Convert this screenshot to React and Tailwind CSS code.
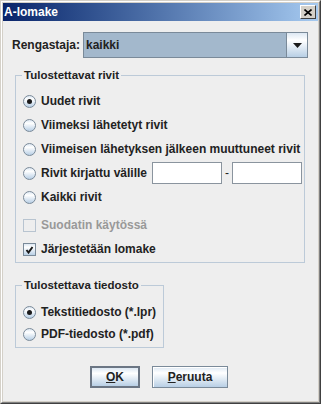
import React from 'react'

const grad = 'bg-[linear-gradient(to_bottom,#dde8f3_0%,#ffffff_30%,#b8cfe5_100%)]'

function Radio({ checked }) {
  return (
    <span className={`relative flex items-center justify-center w-[13px] h-[13px] rounded-full border border-[#7a8a99] ${grad}`}>
      {checked && <span className="w-[5px] h-[5px] rounded-full bg-[#1a1a1a]" />}
    </span>
  )
}

function Check({ checked, disabled }) {
  return (
    <span
      className={`flex items-center justify-center w-[13px] h-[13px] border ${
        disabled ? 'border-[#b8c4d0] bg-transparent' : `border-[#7a8a99] ${grad}`
      }`}
    >
      {checked && (
        <svg width="9" height="9" viewBox="0 0 9 9">
          <path d="M1.5 5 L3.5 7.5 L7.5 2" fill="none" stroke="#1a1a1a" strokeWidth="2" />
        </svg>
      )}
    </span>
  )
}

function Row({ children, className = '' }) {
  return <div className={`flex items-center h-[24px] ${className}`}>{children}</div>
}

function Field() {
  return <span className="w-[70px] h-[22px] border border-[#8a949e] bg-white" />
}

export default function App() {
  return (
    <div className="w-[321px] h-[404px] border-t border-l border-[#d4d0c8] border-r border-b border-r-[#404040] border-b-[#404040] font-['Liberation_Sans',Arial,sans-serif] text-[12px] font-bold text-[#222]">
      <div className="h-full border-t border-l border-white border-r border-b border-r-[#808080] border-b-[#808080] bg-[#d4d0c8] p-px flex flex-col">
        <div className="flex items-center h-[18px] bg-gradient-to-r from-[#0a246a] to-[#a6caf0] pl-[1px] pr-[2px]">
          <span className="text-white text-[12px] font-bold">A-lomake</span>
          <span className="ml-auto flex items-center justify-center w-[16px] h-[14px] bg-[#d4d0c8] border-t border-l border-white border-r border-b border-r-[#404040] border-b-[#404040]">
            <svg width="8" height="7" viewBox="0 0 8 7">
              <path d="M0.5 0.5 L7.5 6.5 M7.5 0.5 L0.5 6.5" stroke="#000" strokeWidth="1.6" />
            </svg>
          </span>
        </div>

        <div className="flex-1 bg-[#eeeeee] flex flex-col pl-[9px] pt-[11px]">
          <div className="flex items-center h-[26px]">
            <span className="w-[71px]">Rengastaja:</span>
            <div className="flex w-[225px] h-[26px] border border-[#7a8a99] bg-[#a3b8cc]">
              <span className="flex-1 flex items-center pl-[2px]">kaikki</span>
              <span className={`flex items-center justify-center w-[21px] border-l border-[#7a8a99] ${grad}`}>
                <svg width="9" height="5" viewBox="0 0 9 5">
                  <path d="M0 0 H9 L4.5 5 Z" fill="#1a1a1a" />
                </svg>
              </span>
            </div>
          </div>

          <fieldset className="ml-[3px] mt-[10px] w-[290px] border border-[#bccad8] pl-[7px] pb-[1px]">
            <legend className="ml-[-1px] px-[2px] leading-[14px] text-[11.5px]">Tulostettavat rivit</legend>
            <div className="pt-[7px] flex flex-col">
              <Row><Radio checked /><span className="ml-[5px]">Uudet rivit</span></Row>
              <Row><Radio /><span className="ml-[5px]">Viimeksi lähetetyt rivit</span></Row>
              <Row><Radio /><span className="ml-[5px]">Viimeisen lähetyksen jälkeen muuttuneet rivit</span></Row>
              <Row>
                <Radio />
                <span className="ml-[5px] w-[111px]">Rivit kirjattu välille</span>
                <Field />
                <span className="w-[10px] text-center font-normal">-</span>
                <Field />
              </Row>
              <Row><Radio /><span className="ml-[5px]">Kaikki rivit</span></Row>
              <Row className="mt-[4px]"><Check disabled /><span className="ml-[5px] text-[#999]">Suodatin käytössä</span></Row>
              <Row><Check checked /><span className="ml-[5px]">Järjestetään lomake</span></Row>
            </div>
          </fieldset>

          <fieldset className="ml-[3px] mt-[15px] w-[149px] border border-[#bccad8] pl-[7px] pb-[2px]">
            <legend className="ml-[-1px] px-[2px] leading-[14px] text-[11.5px]">Tulostettava tiedosto</legend>
            <div className="pt-[9px] flex flex-col">
              <div className="flex items-center h-[22px]"><Radio checked /><span className="ml-[5px]">Tekstitiedosto (*.lpr)</span></div>
              <div className="flex items-center h-[22px]"><Radio /><span className="ml-[5px]">PDF-tiedosto (*.pdf)</span></div>
            </div>
          </fieldset>

          <div className="flex justify-center gap-[12px] mt-[18px] pr-[12px]">
            <button className={`w-[50px] h-[22px] border-2 border-[#6b7684] ${grad}`}>
              <span className="underline">O</span>K
            </button>
            <button className={`w-[76px] h-[22px] border border-[#7a8a99] shadow-[inset_1px_1px_0_#fff] ${grad}`}>
              <span className="underline">P</span>eruuta
            </button>
          </div>
        </div>
      </div>
    </div>
  )
}
